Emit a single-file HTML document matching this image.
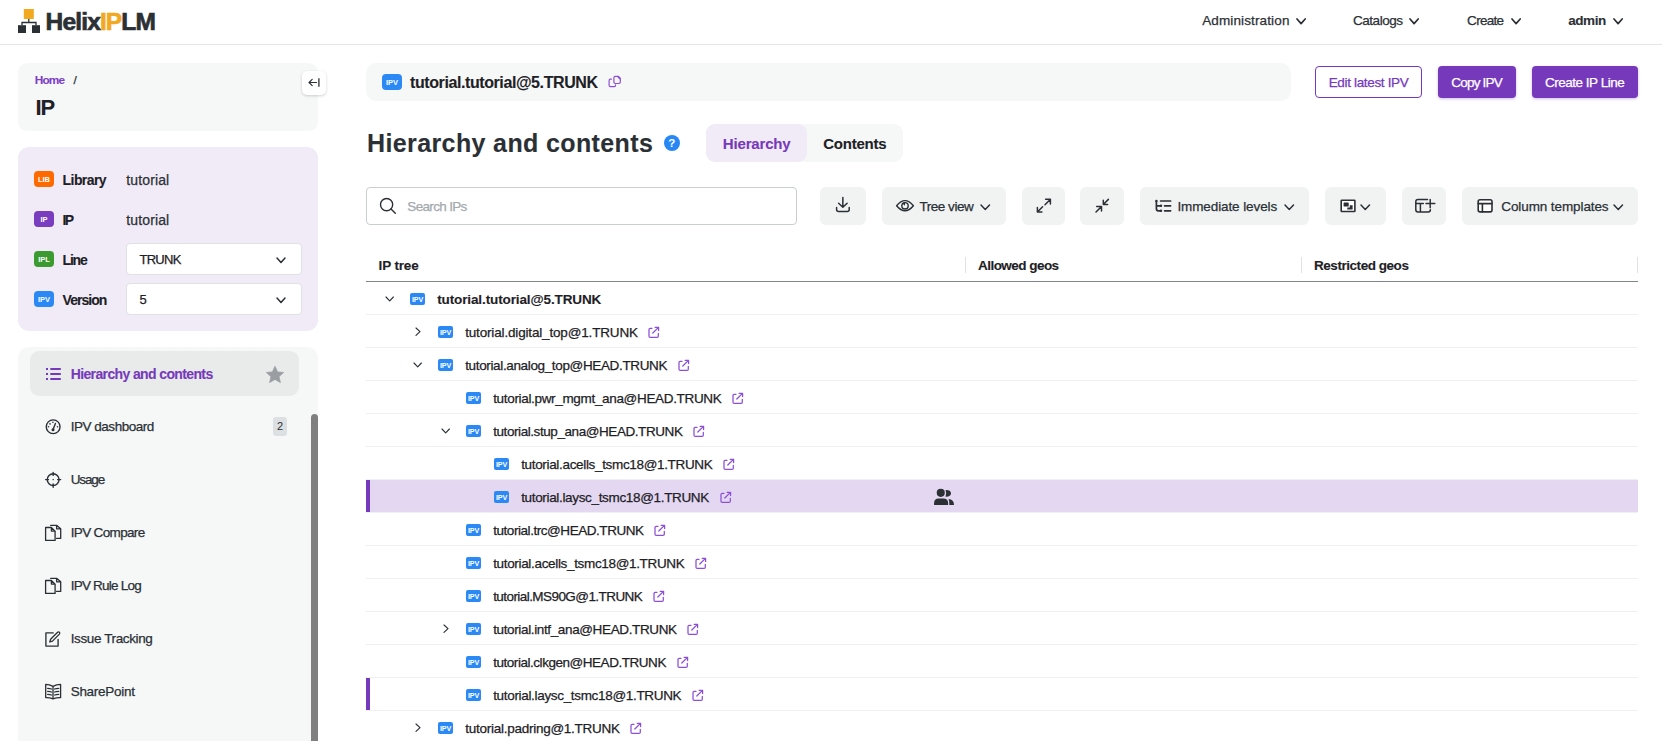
<!DOCTYPE html>
<html><head><meta charset="utf-8"><title>Helix IPLM</title>
<style>
html,body{margin:0;padding:0;}
body{width:1662px;height:741px;overflow:hidden;position:relative;background:#fff;font-family:"Liberation Sans",sans-serif;}
</style></head><body>
<div style="position:absolute;left:0px;top:44px;width:1662px;height:1px;background:#e4e7e9"></div>
<svg style="position:absolute;left:17px;top:8px;" width="25" height="26" viewBox="0 0 25 26"><rect x="6.8" y="1" width="10" height="10" fill="#f2a91f"/><path d="M11.8 11 V14.5 M5 17.5 V14.5 H19 V17.5" fill="none" stroke="#2b3035" stroke-width="1.3"/><rect x="1" y="17.2" width="8" height="7.8" fill="#2b3035"/><rect x="15" y="17.2" width="8" height="7.8" fill="#2b3035"/></svg>
<div style="position:absolute;left:45.6px;top:9.56px;font-size:24.5px;line-height:24.5px;font-weight:bold;letter-spacing:-0.85px;white-space:nowrap;color:#2b3035;-webkit-text-stroke:0.7px #2b3035">Helix<span style="color:#f2a91f;-webkit-text-stroke:0.7px #f2a91f">IP</span>LM</div>
<div style="position:absolute;left:1202.20px;top:13.67px;font-size:13.5px;line-height:13.5px;height:13.5px;font-weight:normal;color:#2b3035;letter-spacing:0.128px;white-space:nowrap;-webkit-text-stroke:0.25px #2b3035;">Administration</div>
<svg style="position:absolute;left:1295.4px;top:17.2px;" width="12.2" height="8.6" viewBox="0 0 12.2 8.6"><path d="M2 2 L6.1 6.6 L10.2 2" fill="none" stroke="#2b3035" stroke-width="1.7" stroke-linecap="round" stroke-linejoin="round"/></svg>
<div style="position:absolute;left:1353.00px;top:13.67px;font-size:13.5px;line-height:13.5px;height:13.5px;font-weight:normal;color:#2b3035;letter-spacing:-0.469px;white-space:nowrap;-webkit-text-stroke:0.25px #2b3035;">Catalogs</div>
<svg style="position:absolute;left:1408.4px;top:17.2px;" width="12.2" height="8.6" viewBox="0 0 12.2 8.6"><path d="M2 2 L6.1 6.6 L10.2 2" fill="none" stroke="#2b3035" stroke-width="1.7" stroke-linecap="round" stroke-linejoin="round"/></svg>
<div style="position:absolute;left:1467.10px;top:13.67px;font-size:13.5px;line-height:13.5px;height:13.5px;font-weight:normal;color:#2b3035;letter-spacing:-0.703px;white-space:nowrap;-webkit-text-stroke:0.25px #2b3035;">Create</div>
<svg style="position:absolute;left:1510.4px;top:17.2px;" width="12.2" height="8.6" viewBox="0 0 12.2 8.6"><path d="M2 2 L6.1 6.6 L10.2 2" fill="none" stroke="#2b3035" stroke-width="1.7" stroke-linecap="round" stroke-linejoin="round"/></svg>
<div style="position:absolute;left:1568.20px;top:13.67px;font-size:13.5px;line-height:13.5px;height:13.5px;font-weight:bold;color:#2b3035;letter-spacing:-0.414px;white-space:nowrap;-webkit-text-stroke:0.1px #2b3035;">admin</div>
<svg style="position:absolute;left:1612.4px;top:17.2px;" width="12.2" height="8.6" viewBox="0 0 12.2 8.6"><path d="M2 2 L6.1 6.6 L10.2 2" fill="none" stroke="#2b3035" stroke-width="1.7" stroke-linecap="round" stroke-linejoin="round"/></svg>
<div style="position:absolute;left:18px;top:63px;width:300px;height:68px;background:#f6f8f8;border-radius:9px"></div>
<div style="position:absolute;left:34.80px;top:74.61px;font-size:11.8px;line-height:11.8px;height:11.8px;font-weight:bold;color:#7c3fc6;letter-spacing:-0.860px;white-space:nowrap;-webkit-text-stroke:0.1px #7c3fc6;">Home</div>
<div style="position:absolute;left:73.50px;top:74.61px;font-size:11.8px;line-height:11.8px;height:11.8px;font-weight:normal;color:#2b3035;letter-spacing:0.000px;white-space:nowrap;-webkit-text-stroke:0.25px #2b3035;">/</div>
<div style="position:absolute;left:35.40px;top:97.38px;font-size:22px;line-height:22px;height:22px;font-weight:bold;color:#1d2125;letter-spacing:-0.890px;white-space:nowrap;-webkit-text-stroke:0.1px #1d2125;">IP</div>
<div style="position:absolute;left:302px;top:71px;width:24px;height:24px;background:#fff;border-radius:5px;box-shadow:0 1px 3px rgba(0,0,0,0.18)"></div>
<svg style="position:absolute;left:302px;top:71px;" width="24" height="24" viewBox="302 71 24 24"><path d="M312.2 79.4 L309 82.5 L312.2 85.6 M309.2 82.5 H316.6" stroke="#2b3035" stroke-width="1.15" fill="none" stroke-linecap="round" stroke-linejoin="round"/><path d="M318.9 78.3 V86.7" stroke="#2b3035" stroke-width="1.3"/></svg>
<div style="position:absolute;left:18px;top:147px;width:300px;height:184px;background:#f1ebf8;border-radius:11px"></div>
<div style="position:absolute;left:34px;top:171px;width:20px;height:16px;background:#ff6a00;border-radius:4px;"></div>
<div style="position:absolute;left:34px;top:172px;width:20px;height:16px;color:#fff;font-weight:bold;font-size:7.5px;line-height:16px;text-align:center;letter-spacing:-0.1px;white-space:nowrap">LIB</div>
<div style="position:absolute;left:62.60px;top:172.65px;font-size:14px;line-height:14px;height:14px;font-weight:bold;color:#1d2125;letter-spacing:-0.577px;white-space:nowrap;-webkit-text-stroke:0.1px #1d2125;">Library</div>
<div style="position:absolute;left:34px;top:211px;width:20px;height:16px;background:#7a3dc0;border-radius:4px;"></div>
<div style="position:absolute;left:34px;top:212px;width:20px;height:16px;color:#fff;font-weight:bold;font-size:7.5px;line-height:16px;text-align:center;letter-spacing:-0.1px;white-space:nowrap">IP</div>
<div style="position:absolute;left:62.60px;top:212.65px;font-size:14px;line-height:14px;height:14px;font-weight:bold;color:#1d2125;letter-spacing:-1.630px;white-space:nowrap;-webkit-text-stroke:0.1px #1d2125;">IP</div>
<div style="position:absolute;left:34px;top:251px;width:20px;height:16px;background:#3b9b30;border-radius:4px;"></div>
<div style="position:absolute;left:34px;top:252px;width:20px;height:16px;color:#fff;font-weight:bold;font-size:7.5px;line-height:16px;text-align:center;letter-spacing:-0.1px;white-space:nowrap">IPL</div>
<div style="position:absolute;left:62.60px;top:252.65px;font-size:14px;line-height:14px;height:14px;font-weight:bold;color:#1d2125;letter-spacing:-1.228px;white-space:nowrap;-webkit-text-stroke:0.1px #1d2125;">Line</div>
<div style="position:absolute;left:34px;top:291px;width:20px;height:16px;background:#2b89f5;border-radius:4px;"></div>
<div style="position:absolute;left:34px;top:292px;width:20px;height:16px;color:#fff;font-weight:bold;font-size:7.5px;line-height:16px;text-align:center;letter-spacing:-0.1px;white-space:nowrap">IPV</div>
<div style="position:absolute;left:62.60px;top:292.65px;font-size:14px;line-height:14px;height:14px;font-weight:bold;color:#1d2125;letter-spacing:-0.964px;white-space:nowrap;-webkit-text-stroke:0.1px #1d2125;">Version</div>
<div style="position:absolute;left:126.30px;top:172.65px;font-size:14px;line-height:14px;height:14px;font-weight:normal;color:#2b3035;letter-spacing:0.127px;white-space:nowrap;-webkit-text-stroke:0.25px #2b3035;">tutorial</div>
<div style="position:absolute;left:126.30px;top:212.65px;font-size:14px;line-height:14px;height:14px;font-weight:normal;color:#2b3035;letter-spacing:0.127px;white-space:nowrap;-webkit-text-stroke:0.25px #2b3035;">tutorial</div>
<div style="position:absolute;left:126px;top:243px;width:173.5px;height:29.5px;background:#fff;border:1px solid #dfe1e4;border-radius:4px"></div>
<div style="position:absolute;left:139.50px;top:252.80px;font-size:13px;line-height:13px;height:13px;font-weight:normal;color:#1d2125;letter-spacing:-0.743px;white-space:nowrap;-webkit-text-stroke:0.25px #1d2125;">TRUNK</div>
<svg style="position:absolute;left:275.3px;top:255.55px;" width="12" height="8.5" viewBox="0 0 12 8.5"><path d="M2 2 L6.0 6.5 L10 2" fill="none" stroke="#2b3035" stroke-width="1.5" stroke-linecap="round" stroke-linejoin="round"/></svg>
<div style="position:absolute;left:126px;top:283px;width:173.5px;height:29.5px;background:#fff;border:1px solid #dfe1e4;border-radius:4px"></div>
<div style="position:absolute;left:139.50px;top:292.80px;font-size:13px;line-height:13px;height:13px;font-weight:normal;color:#1d2125;letter-spacing:0.000px;white-space:nowrap;-webkit-text-stroke:0.25px #1d2125;">5</div>
<svg style="position:absolute;left:275.3px;top:295.55px;" width="12" height="8.5" viewBox="0 0 12 8.5"><path d="M2 2 L6.0 6.5 L10 2" fill="none" stroke="#2b3035" stroke-width="1.5" stroke-linecap="round" stroke-linejoin="round"/></svg>
<div style="position:absolute;left:18px;top:347px;width:300px;height:413px;background:#f6f8f8;border-radius:11px"></div>
<div style="position:absolute;left:30px;top:351px;width:269px;height:45px;background:#e9ebeb;border-radius:9px"></div>
<svg style="position:absolute;left:44px;top:365px;" width="20" height="18" viewBox="0 0 20 18"><rect x="2" y="3" width="2" height="2" fill="#7639bb"/><rect x="6.3" y="3" width="10.5" height="2" fill="#7639bb"/><rect x="2" y="8" width="2" height="2" fill="#7639bb"/><rect x="6.3" y="8" width="10.5" height="2" fill="#7639bb"/><rect x="2" y="13" width="2" height="2" fill="#7639bb"/><rect x="6.3" y="13" width="10.5" height="2" fill="#7639bb"/></svg>
<div style="position:absolute;left:70.70px;top:367.15px;font-size:14px;line-height:14px;height:14px;font-weight:bold;color:#7639bb;letter-spacing:-0.624px;white-space:nowrap;-webkit-text-stroke:0.1px #7639bb;">Hierarchy and contents</div>
<svg style="position:absolute;left:262px;top:362px;" width="26" height="24" viewBox="262 362 26 24"><path d="M275 366.3 L277.6 371.9 L283.6 372.5 L279 376.6 L280.4 382.5 L275 379.4 L269.6 382.5 L271 376.6 L266.4 372.5 L272.4 371.9 Z" fill="#9a9ea3" stroke="#9a9ea3" stroke-width="0.8" stroke-linejoin="round"/></svg>
<div style="position:absolute;left:311px;top:414px;width:7px;height:340px;background:#7f7f7f;border-radius:4px 4px 0 0"></div>
<div style="position:absolute;left:70.70px;top:420.17px;font-size:13.5px;line-height:13.5px;height:13.5px;font-weight:normal;color:#2b3035;letter-spacing:-0.476px;white-space:nowrap;-webkit-text-stroke:0.25px #2b3035;">IPV dashboard</div>
<div style="position:absolute;left:70.70px;top:473.17px;font-size:13.5px;line-height:13.5px;height:13.5px;font-weight:normal;color:#2b3035;letter-spacing:-1.132px;white-space:nowrap;-webkit-text-stroke:0.25px #2b3035;">Usage</div>
<div style="position:absolute;left:70.70px;top:526.17px;font-size:13.5px;line-height:13.5px;height:13.5px;font-weight:normal;color:#2b3035;letter-spacing:-0.653px;white-space:nowrap;-webkit-text-stroke:0.25px #2b3035;">IPV Compare</div>
<div style="position:absolute;left:70.70px;top:579.17px;font-size:13.5px;line-height:13.5px;height:13.5px;font-weight:normal;color:#2b3035;letter-spacing:-0.778px;white-space:nowrap;-webkit-text-stroke:0.25px #2b3035;">IPV Rule Log</div>
<div style="position:absolute;left:70.70px;top:632.17px;font-size:13.5px;line-height:13.5px;height:13.5px;font-weight:normal;color:#2b3035;letter-spacing:-0.380px;white-space:nowrap;-webkit-text-stroke:0.25px #2b3035;">Issue Tracking</div>
<div style="position:absolute;left:70.70px;top:685.17px;font-size:13.5px;line-height:13.5px;height:13.5px;font-weight:normal;color:#2b3035;letter-spacing:-0.289px;white-space:nowrap;-webkit-text-stroke:0.25px #2b3035;">SharePoint</div>
<div style="position:absolute;left:273px;top:417px;width:14px;height:19px;background:#dde0e3;border-radius:3px;font-size:11px;line-height:19px;text-align:center;color:#2b3035">2</div>
<svg style="position:absolute;left:40px;top:414px;" width="26" height="26" viewBox="40 414 26 26"><circle cx="53.15" cy="426.75" r="6.9" stroke="#2b3035" stroke-width="1.4" fill="none" stroke-linecap="round" stroke-linejoin="round"/><path d="M53 429.8 L55.4 423.5" stroke="#2b3035" stroke-width="1.4" fill="none" stroke-linecap="round" stroke-linejoin="round"/><circle cx="53" cy="429.8" r="1.5" fill="#2b3035"/><circle cx="52.9" cy="422.3" r="0.8" fill="#2b3035"/><circle cx="50" cy="423.9" r="0.8" fill="#2b3035"/><circle cx="48.5" cy="426.8" r="0.8" fill="#2b3035"/><circle cx="57.5" cy="426.8" r="0.8" fill="#2b3035"/></svg>
<svg style="position:absolute;left:40px;top:467px;" width="26" height="26" viewBox="40 467 26 26"><circle cx="53.15" cy="479.6" r="5.9" stroke="#2b3035" stroke-width="1.4" fill="none" stroke-linecap="round" stroke-linejoin="round"/><path d="M53.15 472.4 V475.4 M53.15 484 V487.3 M45.6 479.6 H48.5 M57.6 479.6 H60.7" stroke="#2b3035" stroke-width="1.4" fill="none" stroke-linecap="round" stroke-linejoin="round"/><rect x="52.6" y="479" width="1.2" height="1.2" fill="#2b3035"/></svg>
<svg style="position:absolute;left:40px;top:518px;" width="26" height="28" viewBox="40 518 26 28"><path d="M45.6 527.5 H51.4 L55.1 531.1 V540.4 H45.6 Z M51.4 527.5 V531.1 H55.1" stroke="#2b3035" stroke-width="1.3" fill="none" stroke-linecap="round" stroke-linejoin="round"/><path d="M50.6 525.3 H56.6 L60.7 528.8 V538.4 H56.6 M56.6 525.3 V528.8 H60.7" stroke="#2b3035" stroke-width="1.3" fill="none" stroke-linecap="round" stroke-linejoin="round"/></svg>
<svg style="position:absolute;left:40px;top:571px;" width="26" height="28" viewBox="40 571 26 28"><g transform="translate(0,53)"><path d="M45.6 527.5 H51.4 L55.1 531.1 V540.4 H45.6 Z M51.4 527.5 V531.1 H55.1" stroke="#2b3035" stroke-width="1.3" fill="none" stroke-linecap="round" stroke-linejoin="round"/><path d="M50.6 525.3 H56.6 L60.7 528.8 V538.4 H56.6 M56.6 525.3 V528.8 H60.7" stroke="#2b3035" stroke-width="1.3" fill="none" stroke-linecap="round" stroke-linejoin="round"/></g></svg>
<svg style="position:absolute;left:40px;top:626px;" width="26" height="26" viewBox="40 626 26 26"><path d="M53.2 632.9 H45.9 V646.1 H58.1 V639.4" stroke="#2b3035" stroke-width="1.35" fill="none" stroke-linecap="round" stroke-linejoin="round"/><path d="M49.8 642 L50.6 639.2 L57.6 632.3 Q58.6 631.5 59.4 632.3 Q60.2 633.2 59.4 634.1 L52.5 641.1 Z" stroke="#2b3035" stroke-width="1.3" fill="none" stroke-linecap="round" stroke-linejoin="round"/></svg>
<svg style="position:absolute;left:40px;top:679px;" width="26" height="26" viewBox="40 679 26 26"><path d="M45.7 684.4 V697.6 Q49.5 697.4 53 698.9 Q56.5 697.4 60.6 697.6 V684.4 Q56.5 684.4 53 686.4 Q49.5 684.4 45.7 684.4 Z M53 686.4 V698.9" stroke="#2b3035" stroke-width="1.3" fill="none" stroke-linecap="round" stroke-linejoin="round"/><path d="M47.6 688.3 Q50 688.3 51.5 689 M47.6 691.3 Q50 691.3 51.5 692 M47.6 694.3 Q50 694.3 51.5 695 M54.6 689 Q56 688.3 58.8 688.3 M54.6 692 Q56 691.3 58.8 691.3 M54.6 695 Q56 694.3 58.8 694.3" stroke="#2b3035" stroke-width="1.25" fill="none" stroke-linecap="round" stroke-linejoin="round"/></svg>
<div style="position:absolute;left:366px;top:63px;width:925px;height:38px;background:#f6f8f8;border-radius:10px"></div>
<div style="position:absolute;left:382px;top:74px;width:20px;height:16px;background:#2b89f5;border-radius:4px;"></div>
<div style="position:absolute;left:382px;top:74.5px;width:20px;height:16px;color:#fff;font-weight:bold;font-size:7.5px;line-height:16px;text-align:center;letter-spacing:-0.1px;white-space:nowrap">IPV</div>
<div style="position:absolute;left:410.00px;top:74.86px;font-size:16px;line-height:16px;height:16px;font-weight:bold;color:#1d2125;letter-spacing:-0.409px;white-space:nowrap;-webkit-text-stroke:0.1px #1d2125;">tutorial.tutorial@5.TRUNK</div>
<svg style="position:absolute;left:604px;top:72px;" width="22" height="20" viewBox="604 72 22 20"><path d="M615.3 76.3 H618.3 L620.3 78.3 V82.1 Q620.3 83.5 618.9 83.5 H615.3 Q613.9 83.5 613.9 82.1 V77.7 Q613.9 76.3 615.3 76.3 Z" stroke="#8d4fd6" stroke-width="1.2" fill="none" stroke-linejoin="round"/><path d="M617.8 76.4 L620.2 78.8" stroke="#8d4fd6" stroke-width="1.8"/><path d="M611.4 79.2 H610.4 Q609.1 79.2 609.1 80.5 V85.3 Q609.1 86.6 610.4 86.6 H614.3 Q615.6 86.6 615.6 85.3 V84.9" stroke="#8d4fd6" stroke-width="1.2" fill="none" stroke-linecap="round"/></svg>
<div style="position:absolute;left:1315px;top:66px;width:105px;height:30px;border:1px solid #7639bb;border-radius:4px;background:#fff"></div>
<div style="position:absolute;left:1328.70px;top:75.67px;font-size:13.5px;line-height:13.5px;height:13.5px;font-weight:normal;color:#7639bb;letter-spacing:-0.335px;white-space:nowrap;-webkit-text-stroke:0.25px #7639bb;">Edit latest IPV</div>
<div style="position:absolute;left:1438px;top:66px;width:78px;height:32px;background:#7639bb;border-radius:4px;box-shadow:0 1px 3px rgba(118,57,187,0.35)"></div>
<div style="position:absolute;left:1451.20px;top:75.67px;font-size:13.5px;line-height:13.5px;height:13.5px;font-weight:normal;color:#fff;letter-spacing:-0.775px;white-space:nowrap;-webkit-text-stroke:0.25px #fff;">Copy IPV</div>
<div style="position:absolute;left:1532px;top:66px;width:106px;height:32px;background:#7639bb;border-radius:4px;box-shadow:0 1px 3px rgba(118,57,187,0.35)"></div>
<div style="position:absolute;left:1544.90px;top:75.67px;font-size:13.5px;line-height:13.5px;height:13.5px;font-weight:normal;color:#fff;letter-spacing:-0.474px;white-space:nowrap;-webkit-text-stroke:0.25px #fff;">Create IP Line</div>
<div style="position:absolute;left:367.10px;top:130.54px;font-size:25px;line-height:25px;height:25px;font-weight:bold;color:#2b3035;letter-spacing:0.374px;white-space:nowrap;-webkit-text-stroke:0.1px #2b3035;">Hierarchy and contents</div>
<div style="position:absolute;left:663.7px;top:134.9px;width:16px;height:16px;border-radius:50%;background:#2787f5;color:#fff;font-weight:bold;font-size:11.5px;line-height:16px;text-align:center">?</div>
<div style="position:absolute;left:706px;top:124px;width:197px;height:38px;background:#f6f8f8;border-radius:9px"></div>
<div style="position:absolute;left:706px;top:124px;width:101px;height:38px;background:#f1ebf8;border-radius:9px"></div>
<div style="position:absolute;left:722.80px;top:136.10px;font-size:15px;line-height:15px;height:15px;font-weight:bold;color:#7639bb;letter-spacing:-0.164px;white-space:nowrap;-webkit-text-stroke:0.1px #7639bb;">Hierarchy</div>
<div style="position:absolute;left:823.20px;top:136.10px;font-size:15px;line-height:15px;height:15px;font-weight:bold;color:#1d2125;letter-spacing:-0.214px;white-space:nowrap;-webkit-text-stroke:0.1px #1d2125;">Contents</div>
<div style="position:absolute;left:366px;top:187px;width:429px;height:35.5px;border:1px solid #c9ced2;border-radius:4px;background:#fff"></div>
<svg style="position:absolute;left:378px;top:196px;" width="20" height="20" viewBox="0 0 20 20"><circle cx="8.6" cy="8.6" r="6.1" stroke="#2b3035" stroke-width="1.4" fill="none"/><path d="M13 13 L17.3 17.3" stroke="#2b3035" stroke-width="1.4" stroke-linecap="round"/></svg>
<div style="position:absolute;left:407.30px;top:199.77px;font-size:13.5px;line-height:13.5px;height:13.5px;font-weight:normal;color:#a3a9ae;letter-spacing:-0.670px;white-space:nowrap;-webkit-text-stroke:0.25px #a3a9ae;">Search IPs</div>
<div style="position:absolute;left:820px;top:187px;width:46px;height:38px;background:#f1f3f3;border-radius:6px"></div>
<div style="position:absolute;left:882px;top:187px;width:124px;height:38px;background:#f1f3f3;border-radius:6px"></div>
<div style="position:absolute;left:1022px;top:187px;width:43px;height:38px;background:#f1f3f3;border-radius:6px"></div>
<div style="position:absolute;left:1080px;top:187px;width:44px;height:38px;background:#f1f3f3;border-radius:6px"></div>
<div style="position:absolute;left:1140px;top:187px;width:169px;height:38px;background:#f1f3f3;border-radius:6px"></div>
<div style="position:absolute;left:1325px;top:187px;width:61px;height:38px;background:#f1f3f3;border-radius:6px"></div>
<div style="position:absolute;left:1402px;top:187px;width:44px;height:38px;background:#f1f3f3;border-radius:6px"></div>
<div style="position:absolute;left:1462px;top:187px;width:176px;height:38px;background:#f1f3f3;border-radius:6px"></div>
<svg style="position:absolute;left:830px;top:192px;" width="26" height="26" viewBox="830 192 26 26"><path d="M842.85 197.6 V207 M838.6 203.3 L842.85 207.3 L847.1 203.3" stroke="#2b3035" stroke-width="1.5" fill="none" stroke-linecap="round" stroke-linejoin="round"/><path d="M836.6 207.4 V209.6 Q836.6 211.6 838.6 211.6 H847.2 Q849.2 211.6 849.2 209.6 V207.4" stroke="#2b3035" stroke-width="1.5" fill="none" stroke-linecap="round" stroke-linejoin="round"/></svg>
<svg style="position:absolute;left:890px;top:192px;" width="30" height="26" viewBox="890 192 30 26"><path d="M896.6 205.7 Q905 195.6 913.4 205.7 Q905 215.8 896.6 205.7 Z" stroke="#2b3035" stroke-width="1.4" fill="none" stroke-linecap="round" stroke-linejoin="round"/><circle cx="905" cy="205.8" r="3.2" stroke="#2b3035" stroke-width="1.4" fill="none" stroke-linecap="round" stroke-linejoin="round"/><path d="M902.6 203.8 Q903.5 202.6 905 202.6 L905 205.8 Z" fill="#2b3035"/></svg>
<div style="position:absolute;left:919.40px;top:199.77px;font-size:13.5px;line-height:13.5px;height:13.5px;font-weight:normal;color:#2b3035;letter-spacing:-0.456px;white-space:nowrap;-webkit-text-stroke:0.25px #2b3035;">Tree view</div>
<svg style="position:absolute;left:979.25px;top:202.75px;" width="12.5" height="8.5" viewBox="0 0 12.5 8.5"><path d="M2 2 L6.25 6.5 L10.5 2" fill="none" stroke="#2b3035" stroke-width="1.5" stroke-linecap="round" stroke-linejoin="round"/></svg>
<svg style="position:absolute;left:1030px;top:192px;" width="30" height="26" viewBox="1030 192 30 26"><path d="M1045.6 199.3 H1050.4 V204 M1050.2 199.5 L1045 204.7 M1037.4 207.5 V212 H1041.9 M1037.6 211.8 L1042.6 206.8" stroke="#2b3035" stroke-width="1.5" fill="none" stroke-linecap="round" stroke-linejoin="round"/></svg>
<svg style="position:absolute;left:1090px;top:192px;" width="25" height="26" viewBox="1090 192 25 26"><path d="M1103.3 200.3 V204.5 H1107.6 M1103.5 204.3 L1108.4 199.4 M1096.7 206.5 H1101.5 V211.1 M1101.3 206.7 L1096 212" stroke="#2b3035" stroke-width="1.5" fill="none" stroke-linecap="round" stroke-linejoin="round"/></svg>
<svg style="position:absolute;left:1150px;top:194px;" width="26" height="24" viewBox="1150 194 26 24"><path d="M1156.4 201 V208.8 Q1156.4 210.8 1158.4 210.8 H1161 M1156.4 205.8 H1161" stroke="#2b3035" stroke-width="1.7" fill="none" stroke-linecap="round" stroke-linejoin="round"/><circle cx="1156.4" cy="201" r="1.2" fill="#2b3035"/><circle cx="1161" cy="205.8" r="1.2" fill="#2b3035"/><circle cx="1161" cy="210.8" r="1.2" fill="#2b3035"/><path d="M1160.6 201 H1170.6 M1164.6 205.8 H1170.6 M1164.6 210.8 H1170.6" stroke="#2b3035" stroke-width="1.7" fill="none" stroke-linecap="round" stroke-linejoin="round"/></svg>
<div style="position:absolute;left:1177.40px;top:199.77px;font-size:13.5px;line-height:13.5px;height:13.5px;font-weight:normal;color:#2b3035;letter-spacing:-0.099px;white-space:nowrap;-webkit-text-stroke:0.25px #2b3035;">Immediate levels</div>
<svg style="position:absolute;left:1282.55px;top:202.75px;" width="12.5" height="8.5" viewBox="0 0 12.5 8.5"><path d="M2 2 L6.25 6.5 L10.5 2" fill="none" stroke="#2b3035" stroke-width="1.5" stroke-linecap="round" stroke-linejoin="round"/></svg>
<svg style="position:absolute;left:1335px;top:194px;" width="26" height="24" viewBox="1335 194 26 24"><rect x="1341.2" y="200.2" width="13.7" height="11.3" rx="0.6" fill="#fff" stroke="#2b3035" stroke-width="1.6"/><rect x="1343.6" y="202.4" width="5.1" height="4.1" rx="0.6" fill="#2b3035"/><path d="M1349.8 205.3 H1352.6 V209.5 H1347.3 V207.5 H1349.8 Z" fill="#2b3035"/></svg>
<svg style="position:absolute;left:1359.25px;top:202.75px;" width="12.5" height="8.5" viewBox="0 0 12.5 8.5"><path d="M2 2 L6.25 6.5 L10.5 2" fill="none" stroke="#2b3035" stroke-width="1.5" stroke-linecap="round" stroke-linejoin="round"/></svg>
<svg style="position:absolute;left:1410px;top:194px;" width="30" height="24" viewBox="1410 194 30 24"><path d="M1427.5 199.6 H1418 Q1415.8 199.6 1415.8 201.8 V209.8 Q1415.8 212 1418 212 H1428.2 Q1430.4 212 1430.4 209.8 M1415.8 203.6 H1423.3 M1420.4 203.6 V212 M1430.2 199.4 V207.8 M1426 203.6 H1434.8" stroke="#2b3035" stroke-width="1.5" fill="none" stroke-linecap="round" stroke-linejoin="round"/></svg>
<svg style="position:absolute;left:1472px;top:194px;" width="26" height="24" viewBox="1472 194 26 24"><rect x="1478.2" y="199.8" width="13.8" height="12.1" rx="1.8" fill="#fff" stroke="#2b3035" stroke-width="1.6"/><path d="M1478.2 203.6 H1492 M1482.4 203.6 V211.9" stroke="#2b3035" stroke-width="1.6" fill="none" stroke-linecap="round" stroke-linejoin="round"/></svg>
<div style="position:absolute;left:1501.30px;top:199.77px;font-size:13.5px;line-height:13.5px;height:13.5px;font-weight:normal;color:#2b3035;letter-spacing:-0.100px;white-space:nowrap;-webkit-text-stroke:0.25px #2b3035;">Column templates</div>
<svg style="position:absolute;left:1611.55px;top:202.75px;" width="12.5" height="8.5" viewBox="0 0 12.5 8.5"><path d="M2 2 L6.25 6.5 L10.5 2" fill="none" stroke="#2b3035" stroke-width="1.5" stroke-linecap="round" stroke-linejoin="round"/></svg>
<div style="position:absolute;left:378.60px;top:259.07px;font-size:13.5px;line-height:13.5px;height:13.5px;font-weight:bold;color:#1d2125;letter-spacing:-0.154px;white-space:nowrap;-webkit-text-stroke:0.1px #1d2125;">IP tree</div>
<div style="position:absolute;left:978.00px;top:259.07px;font-size:13.5px;line-height:13.5px;height:13.5px;font-weight:bold;color:#1d2125;letter-spacing:-0.537px;white-space:nowrap;-webkit-text-stroke:0.1px #1d2125;">Allowed geos</div>
<div style="position:absolute;left:1314.00px;top:259.07px;font-size:13.5px;line-height:13.5px;height:13.5px;font-weight:bold;color:#1d2125;letter-spacing:-0.455px;white-space:nowrap;-webkit-text-stroke:0.1px #1d2125;">Restricted geos</div>
<div style="position:absolute;left:965px;top:257px;width:1px;height:16px;background:#dfe2e5"></div>
<div style="position:absolute;left:1301px;top:257px;width:1px;height:16px;background:#dfe2e5"></div>
<div style="position:absolute;left:1637px;top:257px;width:1px;height:16px;background:#dfe2e5"></div>
<div style="position:absolute;left:366px;top:281px;width:1272px;height:1px;background:#80858c"></div>
<div style="position:absolute;left:366px;top:314px;width:1272px;height:1px;background:#eef0f1"></div>
<svg style="position:absolute;left:384.3px;top:294.90000000000003px;" width="11.4" height="7.8" viewBox="0 0 11.4 7.8"><path d="M2 2 L5.7 5.8 L9.4 2" fill="none" stroke="#2b3035" stroke-width="1.15" stroke-linecap="round" stroke-linejoin="round"/></svg>
<div style="position:absolute;left:410px;top:293.2px;width:15px;height:11.5px;background:#2b89f5;border-radius:2px;"></div>
<div style="position:absolute;left:410px;top:293.59999999999997px;width:15px;height:11.5px;color:#fff;font-weight:bold;font-size:7.2px;line-height:11.5px;text-align:center;letter-spacing:-0.2px;white-space:nowrap">IPV</div>
<div style="position:absolute;left:437.20px;top:292.57px;font-size:13.5px;line-height:13.5px;height:13.5px;font-weight:bold;color:#1d2125;letter-spacing:-0.117px;white-space:nowrap;-webkit-text-stroke:0.1px #1d2125;">tutorial.tutorial@5.TRUNK</div>
<div style="position:absolute;left:366px;top:347px;width:1272px;height:1px;background:#eef0f1"></div>
<svg style="position:absolute;left:413.6px;top:326.2px;" width="8" height="11.4" viewBox="0 0 8 11.4"><path d="M2 2 L6 5.7 L2 9.4" fill="none" stroke="#2b3035" stroke-width="1.15" stroke-linecap="round" stroke-linejoin="round"/></svg>
<div style="position:absolute;left:438px;top:326.2px;width:15px;height:11.5px;background:#2b89f5;border-radius:2px;"></div>
<div style="position:absolute;left:438px;top:326.59999999999997px;width:15px;height:11.5px;color:#fff;font-weight:bold;font-size:7.2px;line-height:11.5px;text-align:center;letter-spacing:-0.2px;white-space:nowrap">IPV</div>
<div style="position:absolute;left:465.20px;top:325.57px;font-size:13.5px;line-height:13.5px;height:13.5px;font-weight:normal;color:#1d2125;letter-spacing:-0.166px;white-space:nowrap;-webkit-text-stroke:0.25px #1d2125;">tutorial.digital_top@1.TRUNK</div>
<svg style="position:absolute;left:648.3px;top:326px;" width="13" height="13" viewBox="0 0 13 13"><path d="M4 2.3 H2.2 Q1 2.3 1 3.5 V10.2 Q1 11.4 2.2 11.4 H9.1 Q10.3 11.4 10.3 10.2 V7.3" stroke="#8d4fd6" stroke-width="1.25" fill="none" stroke-linecap="round"/><path d="M4.8 7 L10.5 1.4 M7.2 1.4 H10.6 V4.6" stroke="#8d4fd6" stroke-width="1.25" fill="none" stroke-linecap="round" stroke-linejoin="round"/></svg>
<div style="position:absolute;left:366px;top:380px;width:1272px;height:1px;background:#eef0f1"></div>
<svg style="position:absolute;left:412.3px;top:360.90000000000003px;" width="11.4" height="7.8" viewBox="0 0 11.4 7.8"><path d="M2 2 L5.7 5.8 L9.4 2" fill="none" stroke="#2b3035" stroke-width="1.15" stroke-linecap="round" stroke-linejoin="round"/></svg>
<div style="position:absolute;left:438px;top:359.2px;width:15px;height:11.5px;background:#2b89f5;border-radius:2px;"></div>
<div style="position:absolute;left:438px;top:359.59999999999997px;width:15px;height:11.5px;color:#fff;font-weight:bold;font-size:7.2px;line-height:11.5px;text-align:center;letter-spacing:-0.2px;white-space:nowrap">IPV</div>
<div style="position:absolute;left:465.20px;top:358.57px;font-size:13.5px;line-height:13.5px;height:13.5px;font-weight:normal;color:#1d2125;letter-spacing:-0.353px;white-space:nowrap;-webkit-text-stroke:0.25px #1d2125;">tutorial.analog_top@HEAD.TRUNK</div>
<svg style="position:absolute;left:677.8px;top:359px;" width="13" height="13" viewBox="0 0 13 13"><path d="M4 2.3 H2.2 Q1 2.3 1 3.5 V10.2 Q1 11.4 2.2 11.4 H9.1 Q10.3 11.4 10.3 10.2 V7.3" stroke="#8d4fd6" stroke-width="1.25" fill="none" stroke-linecap="round"/><path d="M4.8 7 L10.5 1.4 M7.2 1.4 H10.6 V4.6" stroke="#8d4fd6" stroke-width="1.25" fill="none" stroke-linecap="round" stroke-linejoin="round"/></svg>
<div style="position:absolute;left:366px;top:413px;width:1272px;height:1px;background:#eef0f1"></div>
<div style="position:absolute;left:466px;top:392.2px;width:15px;height:11.5px;background:#2b89f5;border-radius:2px;"></div>
<div style="position:absolute;left:466px;top:392.59999999999997px;width:15px;height:11.5px;color:#fff;font-weight:bold;font-size:7.2px;line-height:11.5px;text-align:center;letter-spacing:-0.2px;white-space:nowrap">IPV</div>
<div style="position:absolute;left:493.20px;top:391.57px;font-size:13.5px;line-height:13.5px;height:13.5px;font-weight:normal;color:#1d2125;letter-spacing:-0.328px;white-space:nowrap;-webkit-text-stroke:0.25px #1d2125;">tutorial.pwr_mgmt_ana@HEAD.TRUNK</div>
<svg style="position:absolute;left:732.0999999999999px;top:392px;" width="13" height="13" viewBox="0 0 13 13"><path d="M4 2.3 H2.2 Q1 2.3 1 3.5 V10.2 Q1 11.4 2.2 11.4 H9.1 Q10.3 11.4 10.3 10.2 V7.3" stroke="#8d4fd6" stroke-width="1.25" fill="none" stroke-linecap="round"/><path d="M4.8 7 L10.5 1.4 M7.2 1.4 H10.6 V4.6" stroke="#8d4fd6" stroke-width="1.25" fill="none" stroke-linecap="round" stroke-linejoin="round"/></svg>
<div style="position:absolute;left:366px;top:446px;width:1272px;height:1px;background:#eef0f1"></div>
<svg style="position:absolute;left:440.3px;top:426.90000000000003px;" width="11.4" height="7.8" viewBox="0 0 11.4 7.8"><path d="M2 2 L5.7 5.8 L9.4 2" fill="none" stroke="#2b3035" stroke-width="1.15" stroke-linecap="round" stroke-linejoin="round"/></svg>
<div style="position:absolute;left:466px;top:425.2px;width:15px;height:11.5px;background:#2b89f5;border-radius:2px;"></div>
<div style="position:absolute;left:466px;top:425.59999999999997px;width:15px;height:11.5px;color:#fff;font-weight:bold;font-size:7.2px;line-height:11.5px;text-align:center;letter-spacing:-0.2px;white-space:nowrap">IPV</div>
<div style="position:absolute;left:493.20px;top:424.57px;font-size:13.5px;line-height:13.5px;height:13.5px;font-weight:normal;color:#1d2125;letter-spacing:-0.429px;white-space:nowrap;-webkit-text-stroke:0.25px #1d2125;">tutorial.stup_ana@HEAD.TRUNK</div>
<svg style="position:absolute;left:693.1999999999999px;top:425px;" width="13" height="13" viewBox="0 0 13 13"><path d="M4 2.3 H2.2 Q1 2.3 1 3.5 V10.2 Q1 11.4 2.2 11.4 H9.1 Q10.3 11.4 10.3 10.2 V7.3" stroke="#8d4fd6" stroke-width="1.25" fill="none" stroke-linecap="round"/><path d="M4.8 7 L10.5 1.4 M7.2 1.4 H10.6 V4.6" stroke="#8d4fd6" stroke-width="1.25" fill="none" stroke-linecap="round" stroke-linejoin="round"/></svg>
<div style="position:absolute;left:366px;top:479px;width:1272px;height:1px;background:#eef0f1"></div>
<div style="position:absolute;left:494px;top:458.2px;width:15px;height:11.5px;background:#2b89f5;border-radius:2px;"></div>
<div style="position:absolute;left:494px;top:458.59999999999997px;width:15px;height:11.5px;color:#fff;font-weight:bold;font-size:7.2px;line-height:11.5px;text-align:center;letter-spacing:-0.2px;white-space:nowrap">IPV</div>
<div style="position:absolute;left:521.20px;top:457.57px;font-size:13.5px;line-height:13.5px;height:13.5px;font-weight:normal;color:#1d2125;letter-spacing:-0.334px;white-space:nowrap;-webkit-text-stroke:0.25px #1d2125;">tutorial.acells_tsmc18@1.TRUNK</div>
<svg style="position:absolute;left:723.0999999999999px;top:458px;" width="13" height="13" viewBox="0 0 13 13"><path d="M4 2.3 H2.2 Q1 2.3 1 3.5 V10.2 Q1 11.4 2.2 11.4 H9.1 Q10.3 11.4 10.3 10.2 V7.3" stroke="#8d4fd6" stroke-width="1.25" fill="none" stroke-linecap="round"/><path d="M4.8 7 L10.5 1.4 M7.2 1.4 H10.6 V4.6" stroke="#8d4fd6" stroke-width="1.25" fill="none" stroke-linecap="round" stroke-linejoin="round"/></svg>
<div style="position:absolute;left:366px;top:480px;width:1272px;height:33px;background:#e4d7f1"></div>
<div style="position:absolute;left:366px;top:480px;width:4px;height:33px;background:#7639bb"></div>
<div style="position:absolute;left:366px;top:512px;width:1272px;height:1px;background:#eef0f1"></div>
<div style="position:absolute;left:494px;top:491.2px;width:15px;height:11.5px;background:#2b89f5;border-radius:2px;"></div>
<div style="position:absolute;left:494px;top:491.59999999999997px;width:15px;height:11.5px;color:#fff;font-weight:bold;font-size:7.2px;line-height:11.5px;text-align:center;letter-spacing:-0.2px;white-space:nowrap">IPV</div>
<div style="position:absolute;left:521.20px;top:490.57px;font-size:13.5px;line-height:13.5px;height:13.5px;font-weight:normal;color:#1d2125;letter-spacing:-0.336px;white-space:nowrap;-webkit-text-stroke:0.25px #1d2125;">tutorial.laysc_tsmc18@1.TRUNK</div>
<svg style="position:absolute;left:719.5999999999999px;top:491px;" width="13" height="13" viewBox="0 0 13 13"><path d="M4 2.3 H2.2 Q1 2.3 1 3.5 V10.2 Q1 11.4 2.2 11.4 H9.1 Q10.3 11.4 10.3 10.2 V7.3" stroke="#8d4fd6" stroke-width="1.25" fill="none" stroke-linecap="round"/><path d="M4.8 7 L10.5 1.4 M7.2 1.4 H10.6 V4.6" stroke="#8d4fd6" stroke-width="1.25" fill="none" stroke-linecap="round" stroke-linejoin="round"/></svg>
<div style="position:absolute;left:366px;top:545px;width:1272px;height:1px;background:#eef0f1"></div>
<div style="position:absolute;left:466px;top:524.2px;width:15px;height:11.5px;background:#2b89f5;border-radius:2px;"></div>
<div style="position:absolute;left:466px;top:524.6px;width:15px;height:11.5px;color:#fff;font-weight:bold;font-size:7.2px;line-height:11.5px;text-align:center;letter-spacing:-0.2px;white-space:nowrap">IPV</div>
<div style="position:absolute;left:493.20px;top:523.57px;font-size:13.5px;line-height:13.5px;height:13.5px;font-weight:normal;color:#1d2125;letter-spacing:-0.447px;white-space:nowrap;-webkit-text-stroke:0.25px #1d2125;">tutorial.trc@HEAD.TRUNK</div>
<svg style="position:absolute;left:654.4px;top:524px;" width="13" height="13" viewBox="0 0 13 13"><path d="M4 2.3 H2.2 Q1 2.3 1 3.5 V10.2 Q1 11.4 2.2 11.4 H9.1 Q10.3 11.4 10.3 10.2 V7.3" stroke="#8d4fd6" stroke-width="1.25" fill="none" stroke-linecap="round"/><path d="M4.8 7 L10.5 1.4 M7.2 1.4 H10.6 V4.6" stroke="#8d4fd6" stroke-width="1.25" fill="none" stroke-linecap="round" stroke-linejoin="round"/></svg>
<div style="position:absolute;left:366px;top:578px;width:1272px;height:1px;background:#eef0f1"></div>
<div style="position:absolute;left:466px;top:557.2px;width:15px;height:11.5px;background:#2b89f5;border-radius:2px;"></div>
<div style="position:absolute;left:466px;top:557.6px;width:15px;height:11.5px;color:#fff;font-weight:bold;font-size:7.2px;line-height:11.5px;text-align:center;letter-spacing:-0.2px;white-space:nowrap">IPV</div>
<div style="position:absolute;left:493.20px;top:556.57px;font-size:13.5px;line-height:13.5px;height:13.5px;font-weight:normal;color:#1d2125;letter-spacing:-0.334px;white-space:nowrap;-webkit-text-stroke:0.25px #1d2125;">tutorial.acells_tsmc18@1.TRUNK</div>
<svg style="position:absolute;left:695.0999999999999px;top:557px;" width="13" height="13" viewBox="0 0 13 13"><path d="M4 2.3 H2.2 Q1 2.3 1 3.5 V10.2 Q1 11.4 2.2 11.4 H9.1 Q10.3 11.4 10.3 10.2 V7.3" stroke="#8d4fd6" stroke-width="1.25" fill="none" stroke-linecap="round"/><path d="M4.8 7 L10.5 1.4 M7.2 1.4 H10.6 V4.6" stroke="#8d4fd6" stroke-width="1.25" fill="none" stroke-linecap="round" stroke-linejoin="round"/></svg>
<div style="position:absolute;left:366px;top:611px;width:1272px;height:1px;background:#eef0f1"></div>
<div style="position:absolute;left:466px;top:590.2px;width:15px;height:11.5px;background:#2b89f5;border-radius:2px;"></div>
<div style="position:absolute;left:466px;top:590.6px;width:15px;height:11.5px;color:#fff;font-weight:bold;font-size:7.2px;line-height:11.5px;text-align:center;letter-spacing:-0.2px;white-space:nowrap">IPV</div>
<div style="position:absolute;left:493.20px;top:589.57px;font-size:13.5px;line-height:13.5px;height:13.5px;font-weight:normal;color:#1d2125;letter-spacing:-0.567px;white-space:nowrap;-webkit-text-stroke:0.25px #1d2125;">tutorial.MS90G@1.TRUNK</div>
<svg style="position:absolute;left:653.0999999999999px;top:590px;" width="13" height="13" viewBox="0 0 13 13"><path d="M4 2.3 H2.2 Q1 2.3 1 3.5 V10.2 Q1 11.4 2.2 11.4 H9.1 Q10.3 11.4 10.3 10.2 V7.3" stroke="#8d4fd6" stroke-width="1.25" fill="none" stroke-linecap="round"/><path d="M4.8 7 L10.5 1.4 M7.2 1.4 H10.6 V4.6" stroke="#8d4fd6" stroke-width="1.25" fill="none" stroke-linecap="round" stroke-linejoin="round"/></svg>
<div style="position:absolute;left:366px;top:644px;width:1272px;height:1px;background:#eef0f1"></div>
<svg style="position:absolute;left:441.6px;top:623.1999999999999px;" width="8" height="11.4" viewBox="0 0 8 11.4"><path d="M2 2 L6 5.7 L2 9.4" fill="none" stroke="#2b3035" stroke-width="1.15" stroke-linecap="round" stroke-linejoin="round"/></svg>
<div style="position:absolute;left:466px;top:623.2px;width:15px;height:11.5px;background:#2b89f5;border-radius:2px;"></div>
<div style="position:absolute;left:466px;top:623.6px;width:15px;height:11.5px;color:#fff;font-weight:bold;font-size:7.2px;line-height:11.5px;text-align:center;letter-spacing:-0.2px;white-space:nowrap">IPV</div>
<div style="position:absolute;left:493.20px;top:622.57px;font-size:13.5px;line-height:13.5px;height:13.5px;font-weight:normal;color:#1d2125;letter-spacing:-0.366px;white-space:nowrap;-webkit-text-stroke:0.25px #1d2125;">tutorial.intf_ana@HEAD.TRUNK</div>
<svg style="position:absolute;left:687.4px;top:623px;" width="13" height="13" viewBox="0 0 13 13"><path d="M4 2.3 H2.2 Q1 2.3 1 3.5 V10.2 Q1 11.4 2.2 11.4 H9.1 Q10.3 11.4 10.3 10.2 V7.3" stroke="#8d4fd6" stroke-width="1.25" fill="none" stroke-linecap="round"/><path d="M4.8 7 L10.5 1.4 M7.2 1.4 H10.6 V4.6" stroke="#8d4fd6" stroke-width="1.25" fill="none" stroke-linecap="round" stroke-linejoin="round"/></svg>
<div style="position:absolute;left:366px;top:677px;width:1272px;height:1px;background:#eef0f1"></div>
<div style="position:absolute;left:466px;top:656.2px;width:15px;height:11.5px;background:#2b89f5;border-radius:2px;"></div>
<div style="position:absolute;left:466px;top:656.6px;width:15px;height:11.5px;color:#fff;font-weight:bold;font-size:7.2px;line-height:11.5px;text-align:center;letter-spacing:-0.2px;white-space:nowrap">IPV</div>
<div style="position:absolute;left:493.20px;top:655.57px;font-size:13.5px;line-height:13.5px;height:13.5px;font-weight:normal;color:#1d2125;letter-spacing:-0.462px;white-space:nowrap;-webkit-text-stroke:0.25px #1d2125;">tutorial.clkgen@HEAD.TRUNK</div>
<svg style="position:absolute;left:676.6999999999999px;top:656px;" width="13" height="13" viewBox="0 0 13 13"><path d="M4 2.3 H2.2 Q1 2.3 1 3.5 V10.2 Q1 11.4 2.2 11.4 H9.1 Q10.3 11.4 10.3 10.2 V7.3" stroke="#8d4fd6" stroke-width="1.25" fill="none" stroke-linecap="round"/><path d="M4.8 7 L10.5 1.4 M7.2 1.4 H10.6 V4.6" stroke="#8d4fd6" stroke-width="1.25" fill="none" stroke-linecap="round" stroke-linejoin="round"/></svg>
<div style="position:absolute;left:366px;top:678px;width:4px;height:33px;background:#7639bb"></div>
<div style="position:absolute;left:366px;top:710px;width:1272px;height:1px;background:#eef0f1"></div>
<div style="position:absolute;left:466px;top:689.2px;width:15px;height:11.5px;background:#2b89f5;border-radius:2px;"></div>
<div style="position:absolute;left:466px;top:689.6px;width:15px;height:11.5px;color:#fff;font-weight:bold;font-size:7.2px;line-height:11.5px;text-align:center;letter-spacing:-0.2px;white-space:nowrap">IPV</div>
<div style="position:absolute;left:493.20px;top:688.57px;font-size:13.5px;line-height:13.5px;height:13.5px;font-weight:normal;color:#1d2125;letter-spacing:-0.325px;white-space:nowrap;-webkit-text-stroke:0.25px #1d2125;">tutorial.laysc_tsmc18@1.TRUNK</div>
<svg style="position:absolute;left:691.9px;top:689px;" width="13" height="13" viewBox="0 0 13 13"><path d="M4 2.3 H2.2 Q1 2.3 1 3.5 V10.2 Q1 11.4 2.2 11.4 H9.1 Q10.3 11.4 10.3 10.2 V7.3" stroke="#8d4fd6" stroke-width="1.25" fill="none" stroke-linecap="round"/><path d="M4.8 7 L10.5 1.4 M7.2 1.4 H10.6 V4.6" stroke="#8d4fd6" stroke-width="1.25" fill="none" stroke-linecap="round" stroke-linejoin="round"/></svg>
<svg style="position:absolute;left:413.6px;top:722.1999999999999px;" width="8" height="11.4" viewBox="0 0 8 11.4"><path d="M2 2 L6 5.7 L2 9.4" fill="none" stroke="#2b3035" stroke-width="1.15" stroke-linecap="round" stroke-linejoin="round"/></svg>
<div style="position:absolute;left:438px;top:722.2px;width:15px;height:11.5px;background:#2b89f5;border-radius:2px;"></div>
<div style="position:absolute;left:438px;top:722.6px;width:15px;height:11.5px;color:#fff;font-weight:bold;font-size:7.2px;line-height:11.5px;text-align:center;letter-spacing:-0.2px;white-space:nowrap">IPV</div>
<div style="position:absolute;left:465.20px;top:721.57px;font-size:13.5px;line-height:13.5px;height:13.5px;font-weight:normal;color:#1d2125;letter-spacing:-0.255px;white-space:nowrap;-webkit-text-stroke:0.25px #1d2125;">tutorial.padring@1.TRUNK</div>
<svg style="position:absolute;left:630.4px;top:722px;" width="13" height="13" viewBox="0 0 13 13"><path d="M4 2.3 H2.2 Q1 2.3 1 3.5 V10.2 Q1 11.4 2.2 11.4 H9.1 Q10.3 11.4 10.3 10.2 V7.3" stroke="#8d4fd6" stroke-width="1.25" fill="none" stroke-linecap="round"/><path d="M4.8 7 L10.5 1.4 M7.2 1.4 H10.6 V4.6" stroke="#8d4fd6" stroke-width="1.25" fill="none" stroke-linecap="round" stroke-linejoin="round"/></svg>
<svg style="position:absolute;left:930px;top:485px;" width="28" height="23" viewBox="930 485 28 23"><circle cx="940.75" cy="492.85" r="4.05" fill="#2b3035"/><path d="M945.5 489.9 Q951 489.7 951 493.35 Q951 497 945.5 496.8 Q947 493.35 945.5 489.9 Z" fill="#2b3035"/><path d="M934.1 505 V503.2 Q934.1 498.6 938.7 498.6 H943.5 Q948.1 498.6 948.1 503.2 V505 Z" fill="#2b3035"/><path d="M948.5 498.9 Q954 499.4 954 505 H949.3 V503.2 Q949.3 500.6 948.5 498.9 Z" fill="#2b3035"/></svg>
</body></html>
